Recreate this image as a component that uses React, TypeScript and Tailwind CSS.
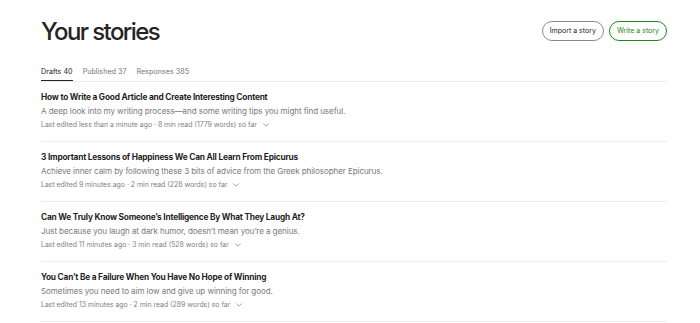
import { ChevronDown } from 'lucide-react';

type Story = {
  title: string;
  subtitle: string;
  edited: string;
  read: string;
  words: string;
};

const stories: Story[] = [
  {
    title: 'How to Write a Good Article and Create Interesting Content',
    subtitle: 'A deep look into my writing process\u2014and some writing tips you might find useful.',
    edited: 'less than a minute ago',
    read: '8 min read',
    words: '1779',
  },
  {
    title: '3 Important Lessons of Happiness We Can All Learn From Epicurus',
    subtitle: 'Achieve inner calm by following these 3 bits of advice from the Greek philosopher Epicurus.',
    edited: '9 minutes ago',
    read: '2 min read',
    words: '228',
  },
  {
    title: 'Can We Truly Know Someone\u2019s Intelligence By What They Laugh At?',
    subtitle: 'Just because you laugh at dark humor, doesn\u2019t mean you\u2019re a genius.',
    edited: '11 minutes ago',
    read: '3 min read',
    words: '528',
  },
  {
    title: 'You Can\u2019t Be a Failure When You Have No Hope of Winning',
    subtitle: 'Sometimes you need to aim low and give up winning for good.',
    edited: '13 minutes ago',
    read: '2 min read',
    words: '289',
  },
];

function StoryRow({ story }: { story: Story }) {
  return (
    <div className="pt-[9px] pb-[10px] border-b border-[#ececec]">
      <h3 className="text-[8.3px] leading-[12px] font-bold text-[#1f1f1f] tracking-[-0.2px]">
        {story.title}
      </h3>
      <p className="mt-[2px] text-[8.1px] leading-[13px] text-[#7a7a7a] tracking-[-0.1px]">{story.subtitle}</p>
      <div className="mt-[1px] flex items-center text-[6.9px] leading-[12px] text-[#808080]">
        <span>
          Last edited {story.edited} · {story.read} ({story.words} words) so far
        </span>
        <ChevronDown className="ml-[4px] w-[10px] h-[10px] text-[#6b6b6b]" strokeWidth={1.5} />
      </div>
    </div>
  );
}

export default function App() {
  return (
    <div className="w-[700px] h-[323px] bg-white overflow-hidden pl-[41px] pr-[33px] font-['Inter',sans-serif]">
      {/* Header */}
      <div className="h-[64px] flex items-center justify-between">
        <h1 className="text-[24px] font-medium text-[#242424] tracking-[-1.6px]">Your stories</h1>
        <div className="flex items-center gap-[5px] -mt-[2px]">
          <button className="h-[20px] px-[7px] rounded-full border border-[#8a8a8a] text-[7px] text-[#242424]">
            Import a story
          </button>
          <button className="h-[20px] px-[7px] rounded-full border border-[#1a8917] text-[7px] text-[#1a8917]">
            Write a story
          </button>
        </div>
      </div>

      {/* Tabs */}
      <div className="h-[18px] flex items-start gap-[10px] border-b border-[#ececec] text-[7.2px] leading-[16px]">
        <span className="text-[#242424] border-b border-[#242424] h-[17px]">Drafts 40</span>
        <span className="text-[#757575]">Published 37</span>
        <span className="text-[#757575]">Responses 385</span>
      </div>

      {/* List */}
      <div>
        {stories.map((s) => (
          <StoryRow key={s.title} story={s} />
        ))}
      </div>
    </div>
  );
}
